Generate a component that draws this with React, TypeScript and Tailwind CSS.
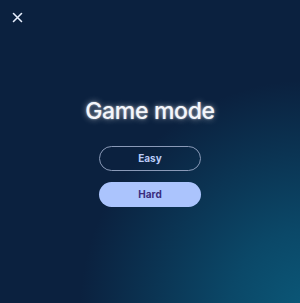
import React from "react";

export default function App() {
  return (
    <div
      className="relative w-[300px] h-[303px] overflow-hidden flex flex-col bg-[#0b213f]"
      style={{
        backgroundImage:
          "radial-gradient(ellipse 230px 230px at 310px 310px, #0b5878 0%, #0b4868 35%, rgba(11,33,63,0) 100%)",
        fontFamily: "Inter, 'Noto Sans', sans-serif",
      }}
    >
      <div className="h-[34px] flex items-center pl-[12px]">
        <svg width="11" height="11" viewBox="0 0 11 11" fill="none">
          <path d="M1.5 1.5 L9.5 9.5 M9.5 1.5 L1.5 9.5" stroke="#e6eefc" strokeWidth="1.6" strokeLinecap="round" />
        </svg>
      </div>
      <div className="flex flex-col items-center">
        <h1
          className="mt-[63px] text-[23px] leading-[28px] font-medium text-[#f4f6fb] tracking-[-0.3px]"
          style={{ textShadow: "0 0 6px rgba(255,255,255,0.55), 0 0 2px rgba(255,255,255,0.6)" }}
        >
          Game mode
        </h1>
        <button className="mt-[21px] w-[102px] h-[25px] rounded-full border border-[#8a9ab8] text-[10px] font-bold text-[#b9cbf7] flex items-center justify-center">
          Easy
        </button>
        <button className="mt-[11px] w-[102px] h-[25px] rounded-full bg-[#abc4fd] text-[10px] font-bold text-[#3a2c7e] flex items-center justify-center">
          Hard
        </button>
      </div>
    </div>
  );
}
